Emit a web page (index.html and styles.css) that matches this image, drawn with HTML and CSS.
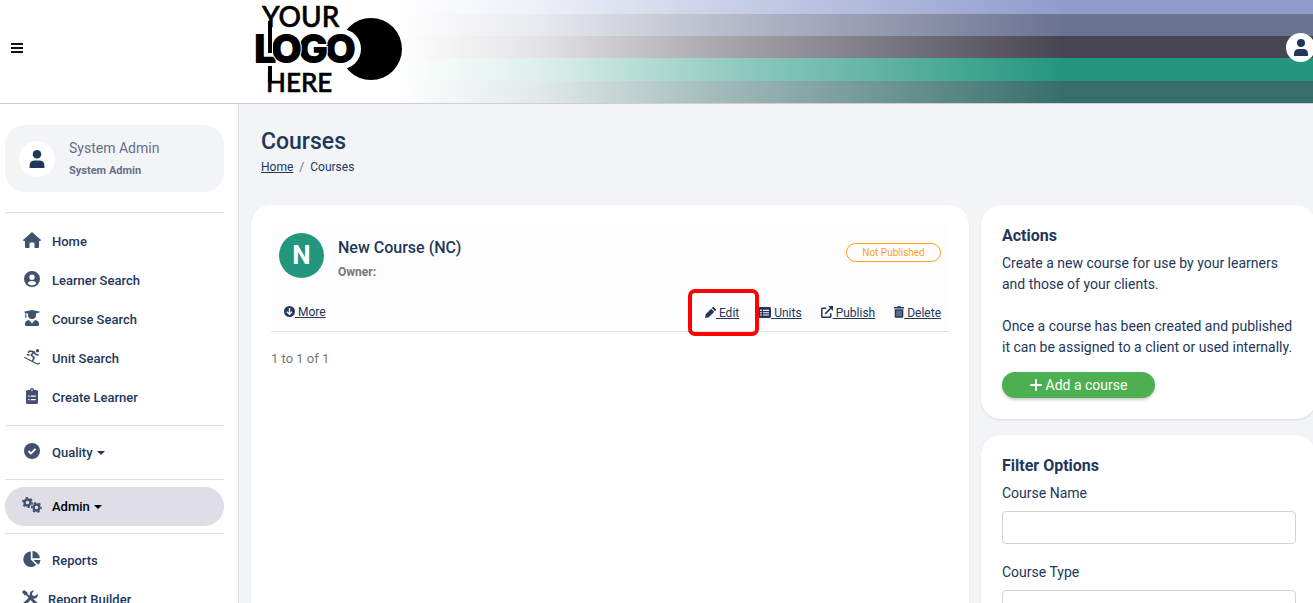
FILE: index.html
```html
<!DOCTYPE html>
<html lang="en">
<head>
  <meta charset="UTF-8">
  <meta name="viewport" content="width=device-width, initial-scale=1.0">
  <title>Courses</title>
  <link rel="stylesheet" href="styles.css">
</head>
<body>
  <!-- Header -->
  <header class="topbar">
    <button type="button" class="menu-toggle" aria-label="Toggle menu">
      <span></span>
      <span></span>
      <span></span>
    </button>
    <a href="#" class="logo" aria-label="Homepage">
      <svg width="154" height="98" viewBox="0 0 154 98">
        <circle cx="120" cy="46" r="31"/>
        <circle cx="90" cy="46" r="20" fill="#fff"/>
        <text class="logo-thin" x="11" y="24">YOUR</text>
        <g class="logo-thick">
          <text x="3" y="60">L</text>
          <text x="74" y="60">O</text>
          <text x="47" y="60">G</text>
          <text x="20" y="60">O</text>
        </g>
        <rect x="16" y="25" width="6" height="26" fill="#fff"/>
        <rect x="17" y="18" width="4" height="32"/>
        <rect x="17" y="63" width="4" height="16"/>
        <text class="logo-thin logo-here" x="15" y="89">HERE</text>
      </svg>
    </a>
    <a href="#" class="avatar avatar-top" aria-label="Account">
      <svg width="14" height="17" viewBox="0 0 14 17"><circle cx="7" cy="4" r="4"/><path d="M0 17v-2q0-5 5-5h4q5 0 5 5v2z"/></svg>
    </a>
  </header>

  <div class="layout">
    <!-- Sidebar -->
    <aside class="sidebar">
      <div class="profile">
        <div class="avatar">
          <svg width="16" height="18" viewBox="0 0 14 17"><circle cx="7" cy="4" r="4"/><path d="M0 17v-2q0-5 5-5h4q5 0 5 5v2z"/></svg>
        </div>
        <div class="profile-text">
          <span class="profile-name">System Admin</span>
          <span class="profile-role">System Admin</span>
        </div>
      </div>
      <hr>
      <nav>
        <div class="nav-group">
          <a href="#" class="nav-item">
            <svg class="icon" viewBox="0 0 18 16"><path d="M9 0 0 8q0 1 1 1h1v6q0 1 1 1h3.500v-4.500q0-1 1-1h3q1 0 1 1V16H15q1 0 1-1V9h1q1 0 1-1z"/></svg>
            Home
          </a>
          <a href="#" class="nav-item">
            <svg class="icon" viewBox="0 0 16 16"><path fill-rule="evenodd" d="M8 0a8 8 0 1 1 0 16A8 8 0 0 1 8 0zm0 3.500a2.700 2.700 0 1 0 0 5.400 2.700 2.700 0 0 0 0-5.400zM3.600 12.600a6.200 6.200 0 0 0 8.800 0q-.8-2.600-3.400-2.600H7q-2.600 0-3.400 2.600z"/></svg>
            Learner Search
          </a>
          <a href="#" class="nav-item">
            <svg class="icon" viewBox="0 0 16 16"><path d="M8 0 .5 1.600v1L1.400 3v2L.8 7.500h1.900L2.200 5V3.200l1.800.4V5a4 4 0 0 0 8 0V3.600l3.500-1v-1zM5 10q-4 .6-4 4v1q0 1 1 1h12q1 0 1-1v-1q0-3.400-4-4l-3 3.500z"/></svg>
            Course Search
          </a>
          <a href="#" class="nav-item">
            <svg class="icon" viewBox="0 0 16 16"><circle cx="13.500" cy="1.700" r="1.700"/><path fill="none" stroke="currentColor" stroke-width="1.700" stroke-linecap="round" stroke-linejoin="round" d="M4.500 3.200 6 2l4 .8L7.300 6l2.800 2.700L8.500 12M10 3l1.500 2.300 2.500.7M3.500 5.500 5 6"/><path fill="none" stroke="currentColor" stroke-width="1.200" stroke-linecap="round" d="m.7 8.500 11.500 6q1.800.9 3.200-.3"/></svg>
            Unit Search
          </a>
          <a href="#" class="nav-item">
            <svg class="icon" viewBox="0 0 16 16"><path fill-rule="evenodd" d="M8 0q1.700 0 2.200 2H12.500q1.500 0 1.500 1.500v11q0 1.500-1.500 1.500h-9Q2 16 2 14.500v-11Q2 2 3.500 2h2.300Q6.300 0 8 0zm0 1.500a.8.8 0 1 0 0 1.600.8.8 0 0 0 0-1.600zM4.200 7.500v1.200h1.300V7.500zm2.500 0v1.200h5.100V7.500zM4.200 11v1.200h1.300V11zm2.500 0v1.200h5.100V11z"/></svg>
            Create Learner
          </a>
        </div>
        <hr>
        <a href="#" class="nav-item">
          <svg class="icon" viewBox="0 0 16 16"><circle cx="8" cy="8" r="8"/><path fill="none" stroke="#fff" stroke-width="1.800" d="m4.500 8 2.500 2.500 4.500-4.700"/></svg>
          Quality <span class="caret"></span>
        </a>
        <hr>
        <a href="#" class="nav-item active">
          <svg class="icon" viewBox="0 0 20 16"><g fill="none" stroke="currentColor"><circle cx="5.500" cy="5.500" r="3" stroke-width="2.400"/><circle cx="5.500" cy="5.500" r="4.700" stroke-width="1.700" stroke-dasharray="2.300 2.620"/><circle cx="14.500" cy="10.500" r="3" stroke-width="2.400"/><circle cx="14.500" cy="10.500" r="4.700" stroke-width="1.700" stroke-dasharray="2.300 2.620" stroke-dashoffset="1"/></g></svg>
          Admin <span class="caret"></span>
        </a>
        <hr>
        <a href="#" class="nav-item">
          <svg class="icon" viewBox="0 0 17 16"><path d="M7.300.6v8l5.400 5.400A7.700 7.700 0 1 1 7.300.6zM9 0a7.500 7.500 0 0 1 7.300 7.300H9zM9.800 9H17a7.500 7.500 0 0 1-2.200 4.700z"/></svg>
          Reports
        </a>
        <a href="#" class="nav-item nav-item-narrow">
          <svg class="icon" viewBox="0 0 16 16"><path d="M2 0 0 2l2.500 3.300h1.800l2.400 2.400-5.900 5.600a1.600 1.600 0 0 0 2.300 2.300L8.500 10l5 5.300a1.600 1.600 0 0 0 2.200-2.300L11 8.800q4 .4 4.800-3L15.500 3.700 13 6l-2.500-.5L10 3 12.300.5Q8 .2 7.700 4v1.700L5.500 4V2.600z"/></svg>
          Report Builder
        </a>
      </nav>
    </aside>

    <!-- Page content -->
    <main class="content">
      <div class="page-head">
        <h1>Courses</h1>
        <div class="breadcrumb">
          <a href="#">Home</a>
          <span class="divider">/</span>
          <span>Courses</span>
        </div>
      </div>

      <div class="columns">
        <section class="card course-list">
          <article class="course">
            <div class="course-top">
              <div class="course-badge">N</div>
              <div class="course-info">
                <h2>New Course (NC)</h2>
                <span class="owner">Owner:</span>
              </div>
              <span class="status">Not Published</span>
            </div>
            <div class="course-links">
              <a href="#" class="more"><svg width="11" height="11" viewBox="0 0 16 16"><circle cx="8" cy="8" r="8"/><path fill="none" stroke="#fff" stroke-width="2" d="M8 3v9M4.200 8.300 8 12l3.800-3.700"/></svg> More</a>
              <div class="course-actions">
                <span class="highlighted">
                  <a href="#"><svg width="11" height="11" viewBox="0 0 16 16"><path d="m0 16 1-5.500 8-8L13.500 7l-8 8zM10 1.500l1-1q1-1 2 0L15.500 3q1 1 0 2l-1 1z"/></svg> Edit</a>
                </span>
                <a href="#"><svg width="13" height="11" viewBox="0 0 18 15"><path fill-rule="evenodd" d="M2 0h14q2 0 2 2v11q0 2-2 2H2q-2 0-2-2V2q0-2 2-2zm.8 3.800v1.500h2.500V3.800zm4.200 0v1.500h8.200V3.800zM2.800 7v1.500h2.500V7zM7 7v1.500h8.200V7zm-4.200 3.200v1.500h2.500v-1.500zm4.200 0v1.500h8.200v-1.500z"/></svg> Units</a>
                <a href="#"><svg width="12" height="12" viewBox="0 0 16 16"><path fill="none" stroke="currentColor" stroke-width="2" d="M7 3H2q-1 0-1 1v10q0 1 1 1h10q1 0 1-1V9.500M5.500 10.500 13 3"/><path d="M9.500 0H16v6.500z"/></svg> Publish</a>
                <a href="#"><svg width="10" height="12" viewBox="0 0 14 16"><path d="M4.500 0h5l.5 1h4v2H0V1h4zM1 4h12v10.500q0 1.500-1.500 1.500h-9Q1 16 1 14.500z"/><path stroke="#fff" stroke-width=".7" d="M4.300 6v8M7 6v8M9.700 6v8"/></svg> Delete</a>
              </div>
            </div>
          </article>
          <p class="pager">1 to 1 of 1</p>
        </section>

        <div class="side">
          <section class="card">
            <h3>Actions</h3>
            <p>Create a new course for use by your learners and those of your clients.</p>
            <p>Once a course has been created and published it can be assigned to a client or used internally.</p>
            <button type="button" class="btn-add"><svg width="12" height="12" viewBox="0 0 12 12"><path stroke="#fff" stroke-width="2" stroke-linecap="round" d="M6 1v10M1 6h10"/></svg> Add a course</button>
          </section>

          <section class="card">
            <h3>Filter Options</h3>
            <form>
              <label for="courseName">Course Name</label>
              <input type="text" id="courseName">
              <label for="courseType">Course Type</label>
              <select id="courseType"></select>
            </form>
          </section>
        </div>
      </div>
    </main>
  </div>
</body>
</html>
```

FILE: styles.css
```css
* {
  box-sizing: border-box;
}

html {
  height: 100%;
}

body {
  font-family: Roboto, sans-serif;
  font-size: 14px;
  line-height: 21px;
  color: #22375c;
  margin: 0;
  height: 100%;
  display: flex;
  flex-direction: column;
  overflow: hidden;
}

a {
  color: inherit;
}

svg {
  fill: currentColor;
}

h1, h2, h3, p {
  margin: 0;
}

hr {
  border: 0;
  border-top: 1px solid #dfe0e3;
  margin: 7px 0;
}

/* Header */
.topbar {
  flex: none;
  display: flex;
  align-items: center;
  height: 104px;
  border-bottom: 1px solid #cfcfd1;
  background:
    linear-gradient(90deg, #fff 30%, rgba(255, 255, 255, 0.85) 41%, rgba(255, 255, 255, 0.5) 56%, rgba(255, 255, 255, 0) 81%),
    linear-gradient(#8f9dcd 14px, #6b7392 14px 36px, #484552 36px 58px, #23967e 58px 81px, #376e6b 81px);
}

.menu-toggle {
  display: flex;
  flex-direction: column;
  gap: 2px;
  width: 12px;
  margin: 0 228px 8px 11px;
  padding: 0;
  border: 0;
  background: none;
  cursor: pointer;
}

.menu-toggle span {
  height: 2px;
  background: #111;
}

.logo {
  display: block;
  height: 98px;
  margin-right: auto;
  color: #000;
}

.logo svg {
  overflow: visible;
}

.logo-thin {
  font: 500 28px Lato, sans-serif;
  stroke: #000;
  stroke-width: 0.6px;
}

.logo-here {
  font-size: 26px;
}

.logo-thick {
  font: 900 40px Inter, sans-serif;
  stroke: #fff;
  stroke-width: 2px;
  paint-order: stroke;
}

.avatar {
  flex: none;
  display: flex;
  align-items: center;
  justify-content: center;
  width: 36px;
  height: 36px;
  border-radius: 50%;
  background: #fff;
  color: #22375c;
}

.avatar-top {
  width: 29px;
  height: 29px;
  margin: 0 -2px 8px 0;
}

.layout {
  flex: 1;
  display: grid;
  grid-template-columns: 239px 1fr;
  min-height: 0;
}

/* Sidebar */
.sidebar {
  padding: 21px 14px 0 5px;
  border-right: 1px solid #e0e1e4;
  overflow: hidden;
}

.profile {
  display: flex;
  align-items: center;
  gap: 14px;
  height: 67px;
  margin-bottom: 20px;
  padding: 0 14px;
  border-radius: 20px;
  background: #f3f4f6;
}

.profile-text {
  display: flex;
  flex-direction: column;
  color: #66708a;
}

.profile-name {
  font-size: 14px;
  line-height: 24px;
}

.profile-role {
  font-size: 11px;
  font-weight: 700;
}

.nav-group {
  padding: 2px 0 1px;
}

.nav-item {
  display: flex;
  align-items: center;
  height: 39px;
  padding-left: 17px;
  border-radius: 20px;
  font-size: 13px;
  font-weight: 500;
  text-decoration: none;
}

.nav-item.active {
  background: #dfdee6;
  color: #000;
}

.icon {
  width: 20px;
  height: 16px;
  margin: 0 10px 3px 0;
  color: #42516f;
}

.nav-item-narrow .icon {
  width: 16px;
}

.caret {
  margin-left: 4px;
  border: 4px solid transparent;
  border-top-color: currentColor;
  border-bottom: 0;
}

/* Content */
.content {
  padding: 22px 0 0 12px;
  background: #f3f4f6;
  min-width: 0;
}

.page-head {
  padding-left: 10px;
}

h1 {
  font-size: 23px;
  line-height: 31px;
  font-weight: 500;
}

.breadcrumb {
  display: flex;
  gap: 6px;
  font-size: 12px;
}

.divider {
  color: #66708a;
}

.columns {
  display: grid;
  grid-template-columns: 1fr 335px;
  gap: 12px;
  margin: 27px -3px 0 0;
}

.card {
  padding: 20px 20px 21px;
  border-radius: 20px;
  background: #fff;
  box-shadow: 0 1px 2px rgba(30, 40, 60, 0.12);
}

.course-list {
  min-height: 420px;
}

.course {
  padding: 8px 8px 7px;
  border-bottom: 1px solid #dfe2e5;
  background: #fdfdfe;
}

.course-top {
  display: flex;
  align-items: flex-start;
  gap: 14px;
}

.course-badge {
  width: 45px;
  height: 45px;
  border-radius: 50%;
  background: #23967e;
  color: #fff;
  font-size: 26px;
  line-height: 45px;
  font-weight: 700;
  text-align: center;
}

.course-info {
  flex: 1;
  padding-top: 3px;
}

h2 {
  font-size: 16px;
  line-height: 24px;
  font-weight: 500;
}

.owner {
  font-size: 12px;
  line-height: 24px;
  font-weight: 700;
  color: #777;
}

.status {
  width: 95px;
  margin-top: 10px;
  border: 1px solid #ff9f1c;
  border-radius: 10px;
  color: #ff9f1c;
  font-size: 10px;
  line-height: 17px;
  text-align: center;
}

.course-links {
  display: flex;
  justify-content: space-between;
  margin-top: 18px;
  font-size: 12px;
}

.course-links svg {
  vertical-align: -1px;
}

.more {
  padding-left: 5px;
}

.course-actions {
  display: flex;
  gap: 19px;
  padding-top: 1px;
}

/* Red frame round the edit link */
.highlighted {
  position: relative;
}

.highlighted::after {
  content: "";
  position: absolute;
  inset: -14px -20px -12px -17px;
  border: 4px solid #f00;
  border-radius: 7px;
  pointer-events: none;
}

.pager {
  margin-top: 16px;
  font-size: 13px;
  color: #777;
}

.side {
  display: flex;
  flex-direction: column;
  gap: 16px;
}

.side .card {
  padding-left: 21px;
}

h3 {
  font-size: 16px;
  line-height: 22px;
  font-weight: 700;
  margin-bottom: 6px;
}

.side p {
  margin-bottom: 21px;
}

.side p + p {
  margin-bottom: 14px;
}

.btn-add {
  display: flex;
  align-items: center;
  justify-content: center;
  gap: 4px;
  width: 153px;
  height: 26px;
  padding: 0;
  border: 0;
  border-radius: 13px;
  background: #4caf50;
  box-shadow: 0 2px 3px rgba(0, 0, 0, 0.2);
  color: #fff;
  font: inherit;
  cursor: pointer;
}

label {
  display: block;
  margin-bottom: 7px;
}

input, select {
  display: block;
  width: 100%;
  height: 33px;
  margin-bottom: 18px;
  border: 1px solid #d0d5da;
  border-radius: 4px;
  background: #fff;
  font: inherit;
  appearance: none;
}
```
